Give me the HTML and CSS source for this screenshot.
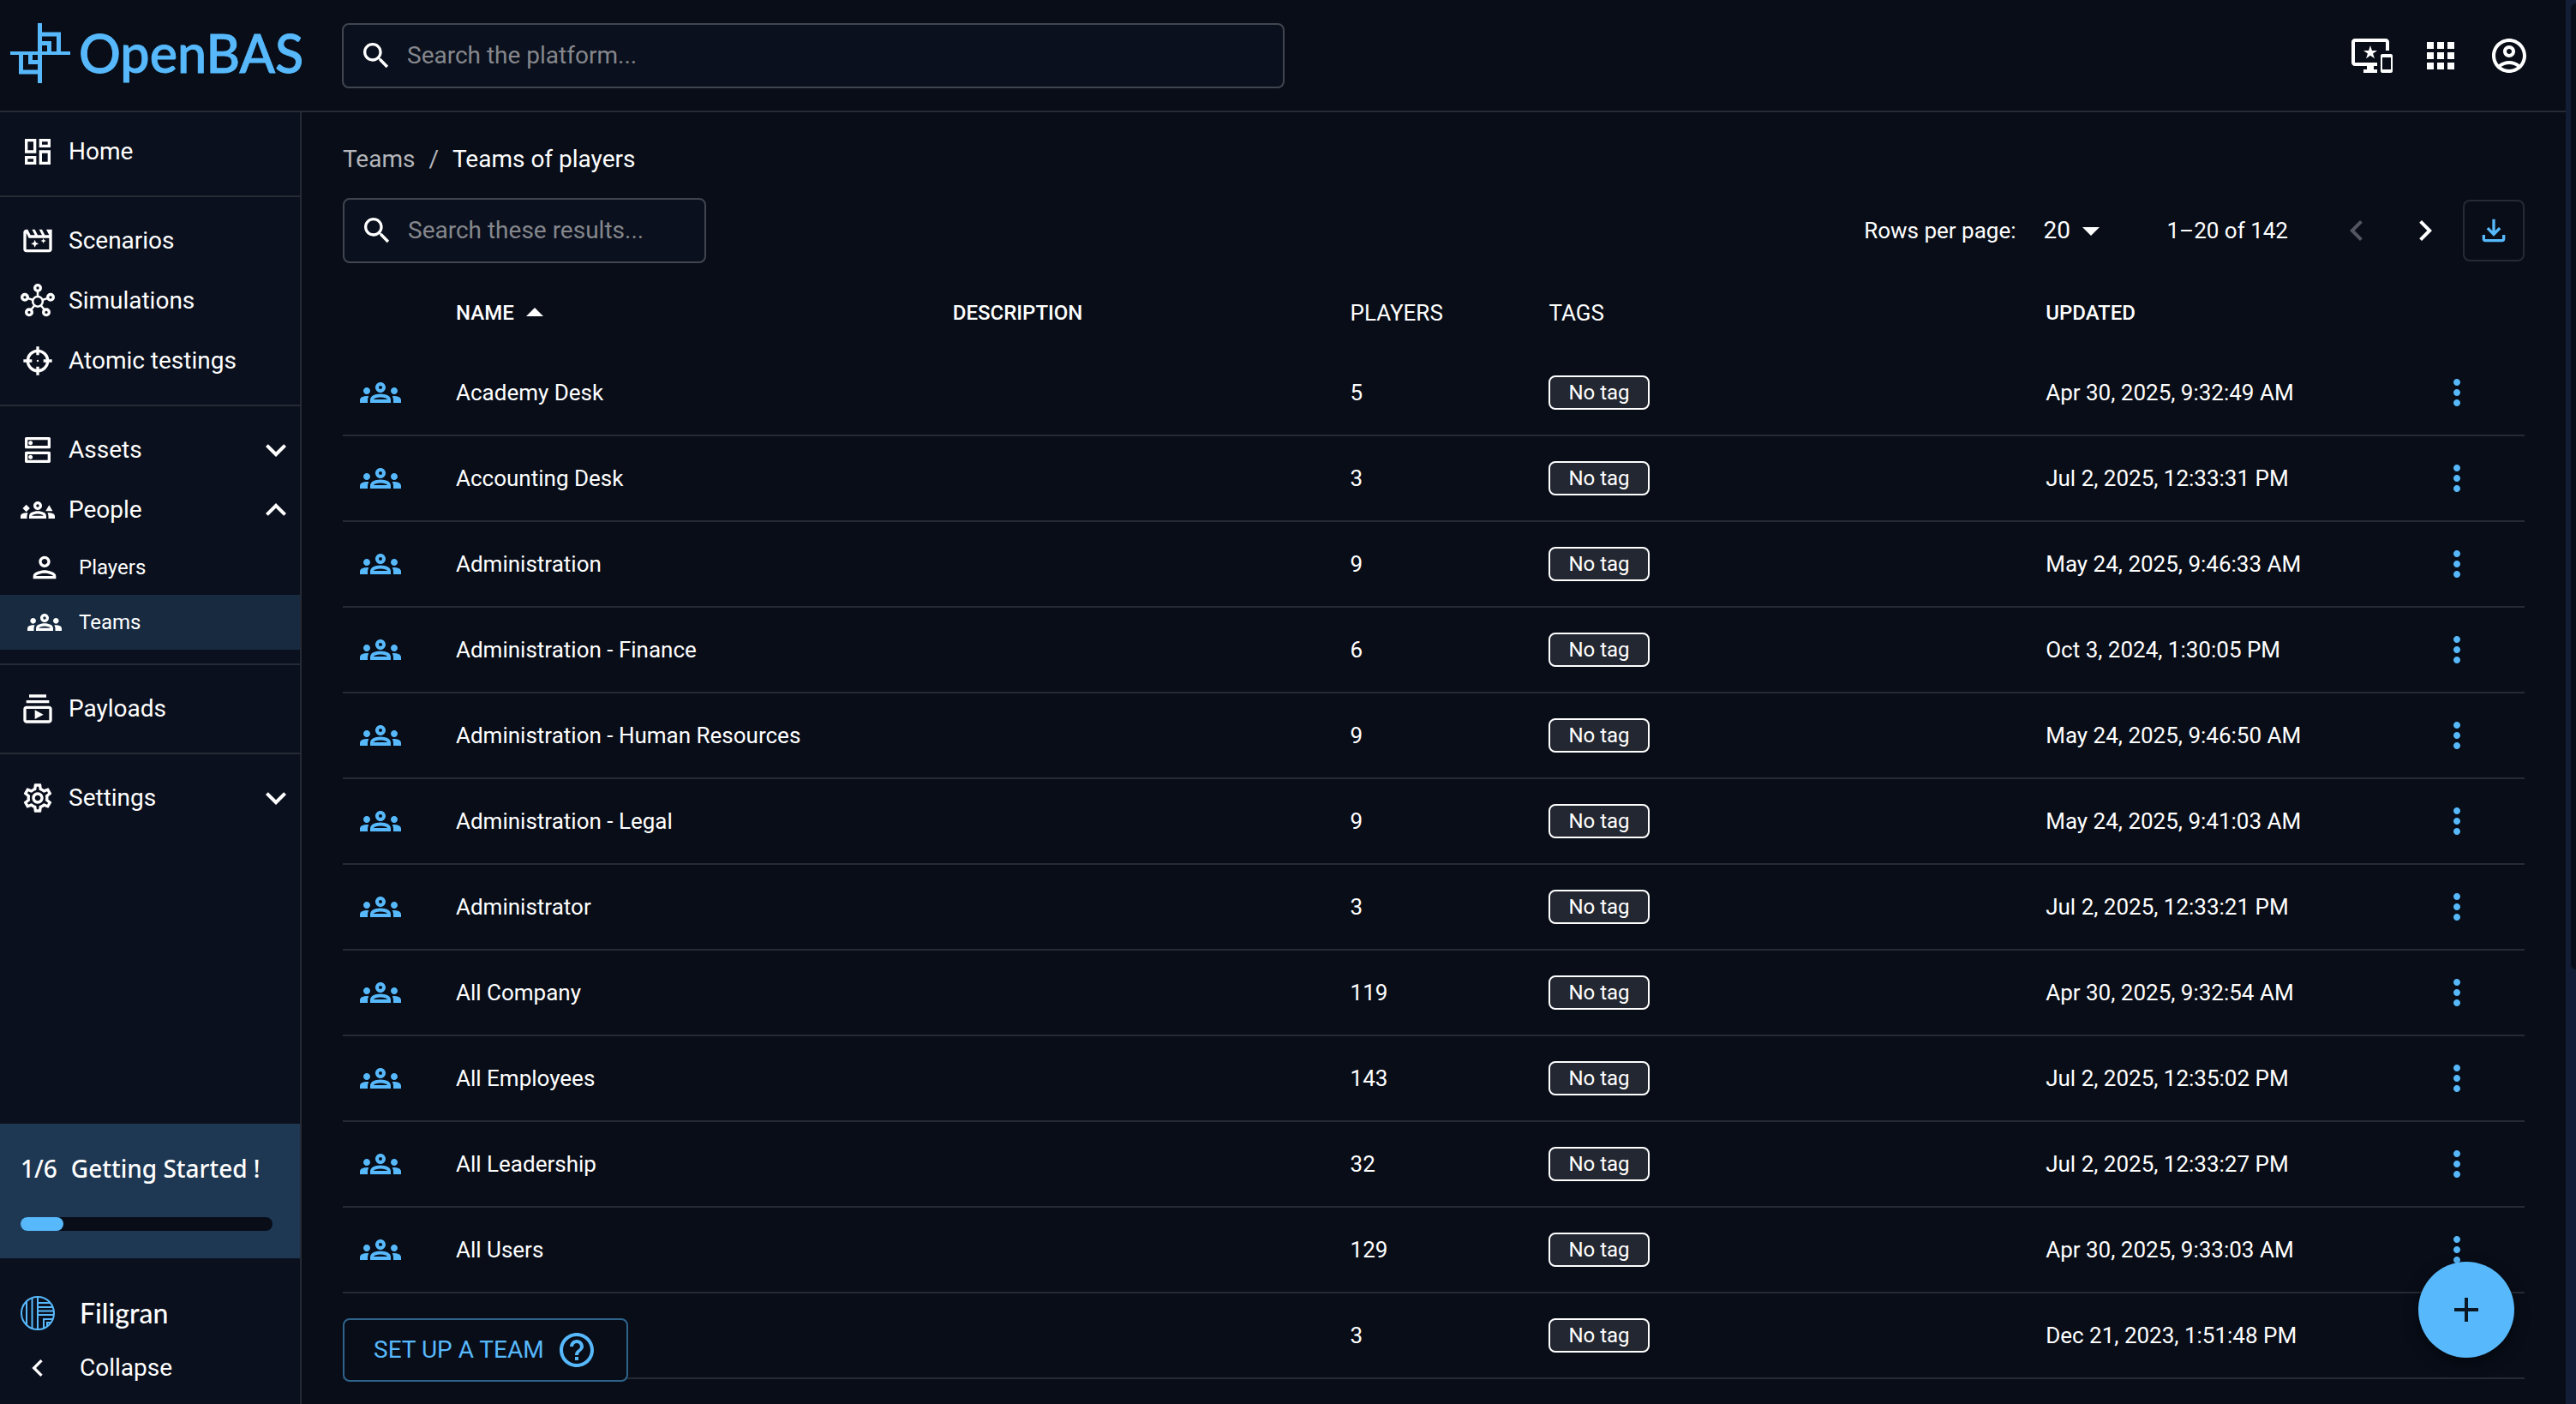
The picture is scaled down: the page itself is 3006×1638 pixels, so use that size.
FILE: index.html
```
<!DOCTYPE html>
<html lang="en">
<head>
<meta charset="utf-8">
<title>OpenBAS - Teams of players</title>
<link rel="stylesheet" href="styles.css">
</head>
<body>
<svg class="sprite" aria-hidden="true">
  <symbol id="i-search" viewBox="0 0 24 24"><path d="M15.5 14h-.79l-.28-.27C15.41 12.59 16 11.11 16 9.5 16 5.91 13.09 3 9.5 3S3 5.91 3 9.5 5.91 16 9.5 16c1.61 0 3.09-.59 4.23-1.57l.27.28v.79l5 4.99L20.49 19zm-6 0C7.01 14 5 11.99 5 9.5S7.01 5 9.5 5 14 7.01 14 9.5 11.99 14 9.5 14"/></symbol>
  <symbol id="i-devices" viewBox="0 0 24 24"><path d="M23 11.01 18 11c-.55 0-1 .45-1 1v9c0 .55.45 1 1 1h5c.55 0 1-.45 1-1v-9c0-.55-.45-.99-1-.99M23 20h-5v-7h5zM20 2H2C.89 2 0 2.89 0 4v12c0 1.1.89 2 2 2h7v2H7v2h8v-2h-2v-2h2v-2H2V4h18v5h2V4c0-1.11-.9-2-2-2m-8.03 7L11 6l-.97 3H7l2.47 1.76-.94 2.91 2.47-1.8 2.47 1.8-.94-2.91L15 9z"/></symbol>
  <symbol id="i-apps" viewBox="0 0 24 24"><path d="M4 8h4V4H4zm6 12h4v-4h-4zm-6 0h4v-4H4zm0-6h4v-4H4zm6 0h4v-4h-4zm6-10v4h4V4zm-6 4h4V4h-4zm6 6h4v-4h-4zm0 6h4v-4h-4z"/></symbol>
  <symbol id="i-account" viewBox="0 0 24 24"><path d="M12 2C6.48 2 2 6.48 2 12s4.48 10 10 10 10-4.48 10-10S17.52 2 12 2M7.35 18.5C8.66 17.56 10.26 17 12 17s3.34.56 4.65 1.5c-1.31.94-2.91 1.5-4.65 1.5s-3.34-.56-4.65-1.5m10.79-1.38C16.45 15.8 14.32 15 12 15s-4.45.8-6.14 2.12C4.7 15.73 4 13.95 4 12c0-4.42 3.58-8 8-8s8 3.58 8 8c0 1.95-.7 3.73-1.86 5.12M12 6c-1.93 0-3.5 1.57-3.5 3.5S10.07 13 12 13s3.5-1.57 3.5-3.5S13.93 6 12 6m0 5c-.83 0-1.5-.67-1.5-1.5S11.17 8 12 8s1.5.67 1.5 1.5S12.83 11 12 11"/></symbol>
  <symbol id="i-home" viewBox="0 0 24 24"><path d="M19 5v2h-4V5zM9 5v6H5V5zm10 8v6h-4v-6zM9 17v2H5v-2zM21 3h-8v6h8zM11 3H3v10h8zm10 8h-8v10h8zm-10 4H3v6h8z"/></symbol>
  <symbol id="i-movie" viewBox="0 0 24 24"><path fill-rule="evenodd" d="M18 4l2 4h-3l-2-4h-2l2 4h-3l-2-4H8l2 4H7L5 4H4c-1.1 0-2 .9-2 2v12c0 1.1.9 2 2 2h16c1.1 0 2-.9 2-2V4zM4 6.500 5.760 10H20v8H4z"/><path d="m10 11.300.800 1.900 1.900.800-1.900.800-.800 1.900-.800-1.900-1.900-.800 1.900-.800zM16 10.200l.550 1.250 1.250.550-1.250.550-.550 1.250-.550-1.250-1.250-.550 1.250-.550z"/></symbol>
  <symbol id="i-hub" viewBox="0 0 24 24"><g fill="none" stroke="currentColor"><g stroke-width="1.500"><path d="M12 5v4M15.200 11.400l3.400-1.150M8.800 11.400 5.400 10.250M9.800 15.200l-2.400 3M14.200 15.200l2.400 3"/><circle cx="12" cy="12.500" r="3.500"/></g><g stroke-width="2"><circle cx="12" cy="3" r="2"/><circle cx="3" cy="9.500" r="2"/><circle cx="21" cy="9.500" r="2"/><circle cx="6" cy="20" r="2"/><circle cx="18" cy="20" r="2"/></g></g></symbol>
  <symbol id="i-target" viewBox="0 0 24 24"><g fill="none" stroke="currentColor" stroke-width="2"><circle cx="12" cy="12" r="7"/><path d="M12 2v6M12 16v6M2 12h6M16 12h6"/></g><circle cx="12" cy="12" r=".7"/></symbol>
  <symbol id="i-dns" viewBox="0 0 24 24"><path d="M19 15v4H5v-4zm1-2H4c-.55 0-1 .45-1 1v6c0 .55.45 1 1 1h16c.55 0 1-.45 1-1v-6c0-.55-.45-1-1-1M7 18.500c-.82 0-1.500-.67-1.500-1.500s.68-1.500 1.500-1.500 1.500.67 1.500 1.500-.67 1.500-1.500 1.500M19 5v4H5V5zm1-2H4c-.55 0-1 .45-1 1v6c0 .55.45 1 1 1h16c.55 0 1-.45 1-1V4c0-.55-.45-1-1-1M7 8.500c-.82 0-1.500-.67-1.500-1.500S6.180 5.500 7 5.500s1.500.68 1.500 1.500S7.830 8.500 7 8.500"/></symbol>
  <symbol id="i-groups" viewBox="0 0 24 24"><path d="M4 13c1.100 0 2-.9 2-2s-.9-2-2-2-2 .9-2 2 .9 2 2 2m1.130 1.100c-.37-.06-.74-.1-1.130-.1-.99 0-1.930.21-2.780.58C.48 14.900 0 15.620 0 16.430V18h4.500v-1.610c0-.83.23-1.610.63-2.290M20 13c1.100 0 2-.9 2-2s-.9-2-2-2-2 .9-2 2 .9 2 2 2m4 3.430c0-.81-.48-1.530-1.220-1.850-.85-.37-1.790-.58-2.780-.58-.39 0-.76.04-1.130.1.4.68.63 1.460.63 2.290V18H24zm-7.760-2.780c-1.170-.52-2.610-.9-4.240-.9s-3.070.39-4.240.9C6.680 14.130 6 15.210 6 16.390V18h12v-1.610c0-1.180-.68-2.260-1.760-2.740M8.070 16c.09-.23.13-.39.91-.69.97-.38 1.990-.56 3.020-.56s2.050.18 3.020.56c.77.3.81.46.91.69zM12 8c.55 0 1 .45 1 1s-.45 1-1 1-1-.45-1-1 .45-1 1-1m0-2c-1.660 0-3 1.340-3 3s1.340 3 3 3 3-1.340 3-3-1.340-3-3-3"/></symbol>
  <symbol id="i-people" viewBox="0 0 24 24"><path d="M4 8.300 6.500 10.800 4 13.300 1.500 10.800zM20 8.500l2.500 4.300h-5zM5.130 14.100c-.37-.06-.74-.1-1.130-.1-.99 0-1.930.21-2.780.58C.48 14.900 0 15.620 0 16.430V18h4.500v-1.610c0-.83.23-1.610.63-2.290M24 16.430c0-.81-.48-1.530-1.220-1.850-.85-.37-1.790-.58-2.780-.58-.39 0-.76.04-1.130.1.4.68.63 1.460.63 2.290V18H24zm-7.760-2.780c-1.170-.52-2.610-.9-4.240-.9s-3.070.39-4.240.9C6.680 14.130 6 15.210 6 16.390V18h12v-1.610c0-1.180-.68-2.260-1.760-2.740M8.070 16c.09-.23.13-.39.91-.69.97-.38 1.990-.56 3.020-.56s2.050.18 3.020.56c.77.3.81.46.91.69zM12 8c.55 0 1 .45 1 1s-.45 1-1 1-1-.45-1-1 .45-1 1-1m0-2c-1.660 0-3 1.340-3 3s1.340 3 3 3 3-1.340 3-3-1.340-3-3-3"/></symbol>
  <symbol id="i-person" viewBox="0 0 24 24"><path d="M12 6c1.100 0 2 .9 2 2s-.9 2-2 2-2-.9-2-2 .9-2 2-2m0 10c2.700 0 5.800 1.290 6 2H6c.23-.72 3.310-2 6-2m0-12C9.790 4 8 5.790 8 8s1.790 4 4 4 4-1.790 4-4-1.790-4-4-4m0 10c-2.670 0-8 1.340-8 4v2h16v-2c0-2.660-5.330-4-8-4"/></symbol>
  <symbol id="i-payloads" viewBox="0 0 24 24"><path d="M4 6h16v2H4zm2-4h12v2H6zm14 8H4c-1.100 0-2 .9-2 2v8c0 1.100.9 2 2 2h16c1.100 0 2-.9 2-2v-8c0-1.100-.9-2-2-2m0 10H4v-8h16zm-10-7.270v6.530L16 16z"/></symbol>
  <symbol id="i-settings" viewBox="0 0 24 24"><path d="M19.430 12.980c.04-.32.07-.64.07-.98s-.03-.66-.07-.98l2.110-1.650c.19-.15.24-.42.12-.64l-2-3.460c-.09-.16-.26-.25-.44-.25-.06 0-.12.01-.17.03l-2.490 1c-.52-.4-1.080-.73-1.690-.98l-.38-2.650C14.460 2.180 14.250 2 14 2h-4c-.25 0-.46.18-.49.42l-.38 2.650c-.61.25-1.170.59-1.690.98l-2.490-1c-.06-.02-.12-.03-.18-.03-.17 0-.34.09-.43.25l-2 3.460c-.13.22-.07.49.12.64l2.110 1.650c-.04.32-.07.65-.07.98s.03.66.07.98l-2.110 1.650c-.19.15-.24.42-.12.64l2 3.460c.09.16.26.25.44.25.06 0 .12-.01.17-.03l2.490-1c.52.4 1.080.73 1.690.98l.38 2.650c.03.24.24.42.49.42h4c.25 0 .46-.18.49-.42l.38-2.650c.61-.25 1.170-.59 1.690-.98l2.490 1c.06.02.12.03.18.03.17 0 .34-.09.43-.25l2-3.460c.12-.22.07-.49-.12-.64zm-1.980-1.710c.04.31.05.52.05.73s-.02.43-.05.73l-.14 1.130.89.7 1.080.84-.7 1.210-1.270-.51-1.040-.42-.9.68c-.43.32-.84.56-1.250.73l-1.060.43-.16 1.130-.2 1.350h-1.400l-.19-1.350-.16-1.130-1.060-.43c-.43-.18-.83-.41-1.230-.71l-.91-.7-1.060.43-1.270.51-.7-1.210 1.080-.84.89-.7-.14-1.130c-.03-.31-.05-.54-.05-.74s.02-.43.05-.73l.14-1.130-.89-.7-1.080-.84.7-1.210 1.270.51 1.040.42.9-.68c.43-.32.84-.56 1.250-.73l1.060-.43.16-1.130.2-1.350h1.390l.19 1.350.16 1.130 1.060.43c.43.18.83.41 1.230.71l.91.7 1.060-.43 1.270-.51.7 1.210-1.070.85-.89.7zM12 8c-2.210 0-4 1.790-4 4s1.790 4 4 4 4-1.790 4-4-1.790-4-4-4m0 6c-1.100 0-2-.9-2-2s.9-2 2-2 2 .9 2 2-.9 2-2 2"/></symbol>
  <symbol id="i-down" viewBox="0 0 24 24"><path d="M16.590 8.590 12 13.170 7.410 8.590 6 10l6 6 6-6z"/></symbol>
  <symbol id="i-up" viewBox="0 0 24 24"><path d="m12 8-6 6 1.410 1.410L12 10.830l4.590 4.580L18 14z"/></symbol>
  <symbol id="i-left" viewBox="0 0 24 24"><path d="M15.410 7.410 14 6l-6 6 6 6 1.410-1.410L10.830 12z"/></symbol>
  <symbol id="i-right" viewBox="0 0 24 24"><path d="M10 6 8.590 7.410 13.170 12l-4.580 4.590L10 18l6-6z"/></symbol>
  <symbol id="i-drop" viewBox="0 0 24 24"><path d="m7 10 5 5 5-5z"/></symbol>
  <symbol id="i-sort" viewBox="0 0 24 24"><path d="m7 14 5-5 5 5z"/></symbol>
  <symbol id="i-download" viewBox="0 0 24 24"><path d="M18 15v3H6v-3H4v3c0 1.100.9 2 2 2h12c1.100 0 2-.9 2-2v-3zm-1-4-1.410-1.410L13 12.170V4h-2v8.170L8.410 9.590 7 11l5 5z"/></symbol>
  <symbol id="i-more" viewBox="0 0 24 24"><path d="M12 8c1.100 0 2-.9 2-2s-.9-2-2-2-2 .9-2 2 .9 2 2 2m0 2c-1.100 0-2 .9-2 2s.9 2 2 2 2-.9 2-2-.9-2-2-2m0 6c-1.100 0-2 .9-2 2s.9 2 2 2 2-.9 2-2-.9-2-2-2"/></symbol>
  <symbol id="i-help" viewBox="0 0 24 24"><path d="M11 18h2v-2h-2zm1-16C6.480 2 2 6.480 2 12s4.480 10 10 10 10-4.480 10-10S17.520 2 12 2m0 18c-4.410 0-8-3.590-8-8s3.590-8 8-8 8 3.590 8 8-3.590 8-8 8m0-14c-2.210 0-4 1.790-4 4h2c0-1.100.9-2 2-2s2 .9 2 2c0 2-3 1.750-3 5h2c0-2.250 3-2.500 3-5 0-2.210-1.790-4-4-4"/></symbol>
  <symbol id="i-add" viewBox="0 0 24 24"><path d="M19 13h-6v6h-2v-6H5v-2h6V5h2v6h6z"/></symbol>
</svg>

<div class="app">
  <header class="topbar">
    <a class="brand" href="#" aria-label="OpenBAS">
      <svg class="brand-mark" viewBox="0 0 70 70" aria-hidden="true"><path d="M32 0h5v33h33v4H37v33h-5V37H0v-4h32zM37 10.500h22V33h-5V15.500H37zM37 21h11v12h-5v-7h-6zM10 37h5v17.500h17v5H10zM21 37h5v6h6v5H21z"/></svg>
      <span class="brand-name">OpenBAS</span>
    </a>
    <label class="field field-platform">
      <svg class="icon"><use href="#i-search"/></svg>
      <input type="search" placeholder="Search the platform..." aria-label="Search the platform">
    </label>
    <div class="top-actions">
      <button type="button" aria-label="Important devices"><svg class="icon-lg"><use href="#i-devices"/></svg></button>
      <button type="button" aria-label="Applications"><svg class="icon-lg"><use href="#i-apps"/></svg></button>
      <button type="button" aria-label="Account"><svg class="icon-lg"><use href="#i-account"/></svg></button>
    </div>
  </header>

  <div class="body">
    <aside class="sidebar">
      <nav class="menu">
        <div class="menu-group">
          <a class="item" href="#"><svg class="icon"><use href="#i-home"/></svg><span>Home</span></a>
        </div>
        <div class="menu-group">
          <a class="item" href="#"><svg class="icon"><use href="#i-movie"/></svg><span>Scenarios</span></a>
          <a class="item" href="#"><svg class="icon"><use href="#i-hub"/></svg><span>Simulations</span></a>
          <a class="item" href="#"><svg class="icon"><use href="#i-target"/></svg><span>Atomic testings</span></a>
        </div>
        <div class="menu-group">
          <a class="item" href="#"><svg class="icon"><use href="#i-dns"/></svg><span>Assets</span><svg class="icon-lg caret"><use href="#i-down"/></svg></a>
          <a class="item" href="#"><svg class="icon"><use href="#i-people"/></svg><span>People</span><svg class="icon-lg caret"><use href="#i-up"/></svg></a>
          <a class="item sub" href="#"><svg class="icon"><use href="#i-person"/></svg><span>Players</span></a>
          <a class="item sub active" href="#" aria-current="page"><svg class="icon"><use href="#i-groups"/></svg><span>Teams</span></a>
        </div>
        <div class="menu-group">
          <a class="item" href="#"><svg class="icon"><use href="#i-payloads"/></svg><span>Payloads</span></a>
        </div>
        <div class="menu-group">
          <a class="item" href="#"><svg class="icon"><use href="#i-settings"/></svg><span>Settings</span><svg class="icon-lg caret"><use href="#i-down"/></svg></a>
        </div>
      </nav>
      <section class="onboarding">
        <p class="onboarding-title"><span>1/6</span><span>Getting Started !</span></p>
        <div class="progress" role="progressbar" aria-valuenow="17" aria-valuemin="0" aria-valuemax="100" aria-label="Getting started"><div class="progress-fill" style="width:17%"></div></div>
      </section>
      <div class="side-footer">
        <a class="foot-item" href="#">
          <svg class="icon filigran" viewBox="0 0 40 40" aria-hidden="true"><defs><clipPath id="disc"><circle cx="20" cy="20" r="19"/></clipPath></defs><g fill="none" stroke="currentColor" stroke-width="2"><circle cx="20" cy="20" r="19"/><g clip-path="url(#disc)"><path d="M7 0v40M13.500 0v40M20 0v40M20 8h20M20 13h20M20 17.500h20M20 22h20M27 40V27h13M31 40v-9h9"/></g></g></svg>
          <span class="filigran-name">Filigran</span>
        </a>
        <button class="foot-item" type="button"><svg class="icon"><use href="#i-left"/></svg><span>Collapse</span></button>
      </div>
    </aside>

    <main class="content">
      <nav class="crumbs" aria-label="Breadcrumb"><a href="#">Teams</a><span>/</span><strong>Teams of players</strong></nav>
      <div class="toolbar">
        <label class="field field-results">
          <svg class="icon"><use href="#i-search"/></svg>
          <input type="search" placeholder="Search these results..." aria-label="Search these results">
        </label>
        <div class="pager">
          <label for="rows">Rows per page:</label>
          <span class="rows-select">
            <select id="rows"><option>20</option></select>
            <svg class="icon-lg"><use href="#i-drop"/></svg>
          </span>
          <span class="range">1–20 of 142</span>
          <button class="page-btn" type="button" disabled aria-label="Previous page"><svg class="icon-lg"><use href="#i-left"/></svg></button>
          <button class="page-btn" type="button" aria-label="Next page"><svg class="icon-lg"><use href="#i-right"/></svg></button>
          <button class="export" type="button" aria-label="Download"><svg class="icon"><use href="#i-download"/></svg></button>
        </div>
      </div>

      <table class="teams">
        <thead>
          <tr><th></th><th>NAME <svg class="icon-lg"><use href="#i-sort"/></svg></th><th>DESCRIPTION</th><th class="plain">PLAYERS</th><th class="plain">TAGS</th><th>UPDATED</th><th></th></tr>
        </thead>
        <tbody>
          <tr><td><svg class="icon-lg"><use href="#i-groups"/></svg></td><td>Academy Desk</td><td></td><td>5</td><td><span class="tag">No tag</span></td><td>Apr 30, 2025, 9:32:49 AM</td><td><button type="button" aria-label="More"><svg class="icon-lg"><use href="#i-more"/></svg></button></td></tr>
          <tr><td><svg class="icon-lg"><use href="#i-groups"/></svg></td><td>Accounting Desk</td><td></td><td>3</td><td><span class="tag">No tag</span></td><td>Jul 2, 2025, 12:33:31 PM</td><td><button type="button" aria-label="More"><svg class="icon-lg"><use href="#i-more"/></svg></button></td></tr>
          <tr><td><svg class="icon-lg"><use href="#i-groups"/></svg></td><td>Administration</td><td></td><td>9</td><td><span class="tag">No tag</span></td><td>May 24, 2025, 9:46:33 AM</td><td><button type="button" aria-label="More"><svg class="icon-lg"><use href="#i-more"/></svg></button></td></tr>
          <tr><td><svg class="icon-lg"><use href="#i-groups"/></svg></td><td>Administration - Finance</td><td></td><td>6</td><td><span class="tag">No tag</span></td><td>Oct 3, 2024, 1:30:05 PM</td><td><button type="button" aria-label="More"><svg class="icon-lg"><use href="#i-more"/></svg></button></td></tr>
          <tr><td><svg class="icon-lg"><use href="#i-groups"/></svg></td><td>Administration - Human Resources</td><td></td><td>9</td><td><span class="tag">No tag</span></td><td>May 24, 2025, 9:46:50 AM</td><td><button type="button" aria-label="More"><svg class="icon-lg"><use href="#i-more"/></svg></button></td></tr>
          <tr><td><svg class="icon-lg"><use href="#i-groups"/></svg></td><td>Administration - Legal</td><td></td><td>9</td><td><span class="tag">No tag</span></td><td>May 24, 2025, 9:41:03 AM</td><td><button type="button" aria-label="More"><svg class="icon-lg"><use href="#i-more"/></svg></button></td></tr>
          <tr><td><svg class="icon-lg"><use href="#i-groups"/></svg></td><td>Administrator</td><td></td><td>3</td><td><span class="tag">No tag</span></td><td>Jul 2, 2025, 12:33:21 PM</td><td><button type="button" aria-label="More"><svg class="icon-lg"><use href="#i-more"/></svg></button></td></tr>
          <tr><td><svg class="icon-lg"><use href="#i-groups"/></svg></td><td>All Company</td><td></td><td>119</td><td><span class="tag">No tag</span></td><td>Apr 30, 2025, 9:32:54 AM</td><td><button type="button" aria-label="More"><svg class="icon-lg"><use href="#i-more"/></svg></button></td></tr>
          <tr><td><svg class="icon-lg"><use href="#i-groups"/></svg></td><td>All Employees</td><td></td><td>143</td><td><span class="tag">No tag</span></td><td>Jul 2, 2025, 12:35:02 PM</td><td><button type="button" aria-label="More"><svg class="icon-lg"><use href="#i-more"/></svg></button></td></tr>
          <tr><td><svg class="icon-lg"><use href="#i-groups"/></svg></td><td>All Leadership</td><td></td><td>32</td><td><span class="tag">No tag</span></td><td>Jul 2, 2025, 12:33:27 PM</td><td><button type="button" aria-label="More"><svg class="icon-lg"><use href="#i-more"/></svg></button></td></tr>
          <tr><td><svg class="icon-lg"><use href="#i-groups"/></svg></td><td>All Users</td><td></td><td>129</td><td><span class="tag">No tag</span></td><td>Apr 30, 2025, 9:33:03 AM</td><td><button type="button" aria-label="More"><svg class="icon-lg"><use href="#i-more"/></svg></button></td></tr>
          <tr><td></td><td></td><td></td><td>3</td><td><span class="tag">No tag</span></td><td>Dec 21, 2023, 1:51:48 PM</td><td></td></tr>
        </tbody>
      </table>

      <button class="setup" type="button">SET UP A TEAM <svg class="icon-lg"><use href="#i-help"/></svg></button>
      <button class="fab" type="button" aria-label="Add"><svg class="icon-lg"><use href="#i-add"/></svg></button>
    </main>
  </div>
</div>
<div class="scroll-track" aria-hidden="true"><div class="scroll-thumb"></div></div>
</body>
</html>
```
FILE: styles.css
```
:root {
  --bg: #080d18;
  --paper: #0a101d;
  --line: #262a34;
  --primary: #57b9fc;
  --track: #131e36;
}

* { box-sizing: border-box; }

body {
  margin: 0;
  height: 100vh;
  display: flex;
  overflow: hidden;
  background: var(--bg);
  color: #fff;
  font: 28px/40px Roboto, "Liberation Sans", sans-serif;
}

a { color: inherit; text-decoration: none; }
button {
  display: flex;
  align-items: center;
  padding: 0;
  border: 0;
  background: none;
  color: inherit;
  font: inherit;
}
svg { fill: currentColor; flex: none; }
.sprite { display: none; }
.icon { width: 40px; height: 40px; }
.icon-lg { width: 48px; height: 48px; }

.app { flex: 1; min-width: 0; display: flex; flex-direction: column; }

/* Top bar */
.topbar {
  flex: none;
  display: flex;
  align-items: center;
  padding: 27px 42px 26px 12px;
  border-bottom: 2px solid var(--line);
}
.brand { width: 387px; display: flex; align-items: center; align-self: flex-start; gap: 10px; color: var(--primary); }
.brand-mark { width: 70px; height: 70px; }
.brand-name { font: 500 61px/70px Lato, sans-serif; -webkit-text-stroke: 1px currentColor; }
.top-actions { margin-left: auto; display: flex; gap: 32px; }

.field {
  display: flex;
  align-items: center;
  gap: 16px;
  height: 76px;
  padding: 0 18px;
  border: 2px solid #41454f;
  border-radius: 8px;
  background: var(--paper);
}
.field input {
  flex: 1;
  min-width: 0;
  padding: 0;
  border: 0;
  outline: 0;
  background: none;
  color: inherit;
  font: inherit;
}
.field input::placeholder { color: #85878c; opacity: 1; }
.field-platform { flex: 0 1 1100px; }
.field-results { width: 424px; }

/* Sidebar */
.body { flex: 1; min-height: 0; display: flex; }
.sidebar {
  width: 352px;
  flex: none;
  display: flex;
  flex-direction: column;
  border-right: 2px solid var(--line);
  background: var(--paper);
}
.menu { flex: 1; }
.menu-group { padding: 16px 0; }
.menu-group:first-child { padding-top: 11px; }
.menu-group + .menu-group { border-top: 2px solid var(--line); }
.item { display: flex; align-items: center; gap: 16px; height: 70px; padding: 0 4px 0 24px; }
.caret { margin-left: auto; }
.item.sub { height: 64px; gap: 20px; padding-left: 32px; font-size: 24px; }
.item.active { background: #172a3f; }

.onboarding { padding: 32px 32px 32px 24px; background: #1e3853; }
.onboarding-title { margin: 0 0 37px; display: flex; gap: 16px; font: 500 28px/40px "Noto Sans", sans-serif; }
.progress { height: 16px; border-radius: 8px; background: var(--bg); }
.progress-fill { height: 16px; border-radius: 8px; background: var(--primary); }

.side-footer { padding: 32px 0 10px; }
.foot-item { display: flex; align-items: center; gap: 29px; height: 64px; padding: 0 24px; }
.filigran { color: var(--primary); }
.filigran-name { font: 500 32px/40px Lato, sans-serif; }

/* Content */
.content { position: relative; flex: 1; min-width: 0; overflow: hidden; padding: 35px 48px 0; }
.crumbs { display: flex; gap: 16px; margin-bottom: 25px; color: #b5b6ba; }
.crumbs strong { color: #fff; font-weight: 400; }
.toolbar { display: flex; align-items: center; justify-content: space-between; }
.pager { display: flex; align-items: center; font-size: 26px; }
.rows-select { display: flex; align-items: center; margin: 0 64px 0 32px; }
.rows-select select {
  appearance: none;
  padding: 0;
  border: 0;
  background: none;
  color: inherit;
  font: inherit;
  font-size: 28px;
}
.page-btn { width: 80px; height: 72px; justify-content: center; }
.page-btn:disabled { color: #53565f; }
.range { margin-right: 40px; }
.export {
  width: 72px;
  height: 72px;
  margin-left: 4px;
  justify-content: center;
  border: 2px solid var(--line);
  border-radius: 8px;
  color: var(--primary);
}

/* Teams table */
.teams { display: block; font-size: 26px; }
.teams thead, .teams tbody { display: block; }
.teams tr {
  display: grid;
  grid-template-columns: 132px 25fr 20fr 10fr 25fr 20fr 95px;
  align-items: center;
  height: 100px;
  border-bottom: 2px solid var(--line);
}
.teams thead tr { height: 102px; padding-top: 14px; border-bottom: 0; }
.teams th, .teams td { display: flex; align-items: center; min-width: 0; padding: 0; white-space: nowrap; }
.teams th { font-size: 24px; font-weight: 500; }
.teams th.plain { font-size: 26px; font-weight: 400; }
.teams td:first-child { padding-left: 20px; color: var(--primary); }
.teams td:last-child { color: var(--primary); }
.teams td button { width: 32px; justify-content: center; }
.tag {
  height: 40px;
  padding: 0 21px;
  border: 2px solid #fff;
  border-radius: 8px;
  background: #232731;
  font-size: 24px;
  line-height: 36px;
}

/* Floating actions */
.setup {
  position: absolute;
  left: 48px;
  bottom: 26px;
  height: 74px;
  gap: 14px;
  padding: 0 34px;
  border: 2px solid #2e648c;
  border-radius: 8px;
  background: var(--bg);
  color: var(--primary);
}
.fab {
  position: absolute;
  right: 60px;
  bottom: 54px;
  width: 112px;
  height: 112px;
  justify-content: center;
  border-radius: 50%;
  background: var(--primary);
  color: #0b1722;
  box-shadow: 0 6px 16px rgba(0, 0, 0, .5);
}

.scroll-track { width: 12px; flex: none; padding: 4px 0 0 6px; background: var(--track); }
.scroll-thumb { height: 69%; border-radius: 6px 0 0 6px; background: var(--bg); }
```
